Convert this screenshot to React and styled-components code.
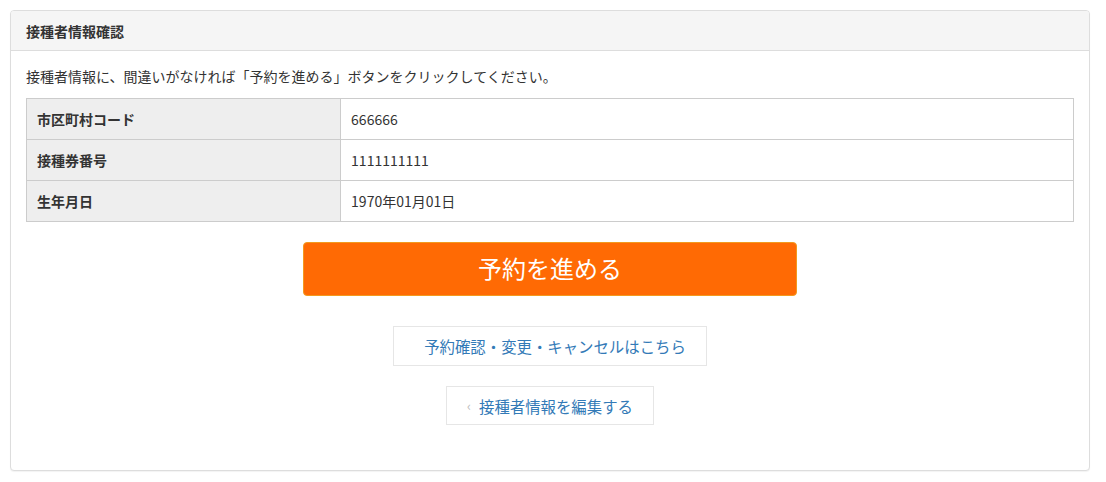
import React from 'react';
import styled, { createGlobalStyle } from 'styled-components';

const GlobalStyle = createGlobalStyle`
  body {
    margin: 0;
    background: #fff;
    font-family: "Noto Sans CJK JP", "Noto Sans", sans-serif;
    color: #333;
  }
`;

const Page = styled.div`
  padding: 10px 16px 10px 10px;
`;

const Panel = styled.div`
  border: 1px solid #ddd;
  border-radius: 4px;
  background: #fff;
  box-shadow: 0 1px 1px rgba(0, 0, 0, 0.05);
`;

const PanelHeader = styled.div`
  background: #f5f5f5;
  border-bottom: 1px solid #ddd;
  border-radius: 3px 3px 0 0;
  height: 39px;
  padding: 0 15px;
  display: flex;
  align-items: center;
`;

const PanelTitle = styled.h3`
  margin: 0;
  font-size: 14px;
  font-weight: bold;
  color: #333;
`;

const PanelBody = styled.div`
  padding: 15px 15px 45px;
`;

const Intro = styled.p`
  margin: 0 0 12px;
  font-size: 14px;
  line-height: 20px;
`;

const Table = styled.table`
  width: 100%;
  border-collapse: collapse;
  border: 1px solid #ccc;
`;

const Th = styled.th`
  width: 30%;
  background: #eee;
  border: 1px solid #ccc;
  text-align: left;
  font-size: 14px;
  font-weight: bold;
  height: 40px;
  padding: 0 10px;
`;

const Td = styled.td`
  border: 1px solid #ccc;
  font-size: 14px;
  height: 40px;
  padding: 0 10px;
`;

const Actions = styled.div`
  display: flex;
  flex-direction: column;
  align-items: center;
  margin-top: 20px;
`;

const PrimaryButton = styled.button`
  width: 494px;
  height: 54px;
  padding: 0 0 4px;
  background: #ff6a04;
  border: 1px solid #f39a1e;
  border-radius: 4px;
  color: #fff;
  font-family: inherit;
  font-size: 24px;
  cursor: pointer;
`;

const LinkButton = styled.a`
  display: flex;
  align-items: center;
  height: ${(p) => p.$h}px;
  box-sizing: border-box;
  margin-top: ${(p) => p.$mt}px;
  padding: 0 20px 0 ${(p) => p.$pl}px;
  border: 1px solid #e6e6e6;
  background: #fff;
  color: #337ab7;
  font-size: 15.4px;
  text-decoration: none;
  cursor: pointer;
`;

const Chevron = styled.span`
  color: #bbb;
  font-size: 13px;
  margin-right: 8px;
`;

const rows = [
  ['市区町村コード', '666666'],
  ['接種券番号', '1111111111'],
  ['生年月日', '1970年01月01日'],
];

const App = () => {
  return (
    <Page>
      <GlobalStyle />
      <Panel>
        <PanelHeader>
          <PanelTitle>接種者情報確認</PanelTitle>
        </PanelHeader>
        <PanelBody>
          <Intro>接種者情報に、間違いがなければ「予約を進める」ボタンをクリックしてください。</Intro>
          <Table>
            <tbody>
              {rows.map(([label, value]) => (
                <tr key={label}>
                  <Th>{label}</Th>
                  <Td>{value}</Td>
                </tr>
              ))}
            </tbody>
          </Table>
          <Actions>
            <PrimaryButton>予約を進める</PrimaryButton>
            <LinkButton $h={40} $mt={30} $pl={30}>予約確認・変更・キャンセルはこちら</LinkButton>
            <LinkButton $h={39} $mt={20} $pl={20}>
              <Chevron>‹</Chevron>
              接種者情報を編集する
            </LinkButton>
          </Actions>
        </PanelBody>
      </Panel>
    </Page>
  );
};

export default App;
